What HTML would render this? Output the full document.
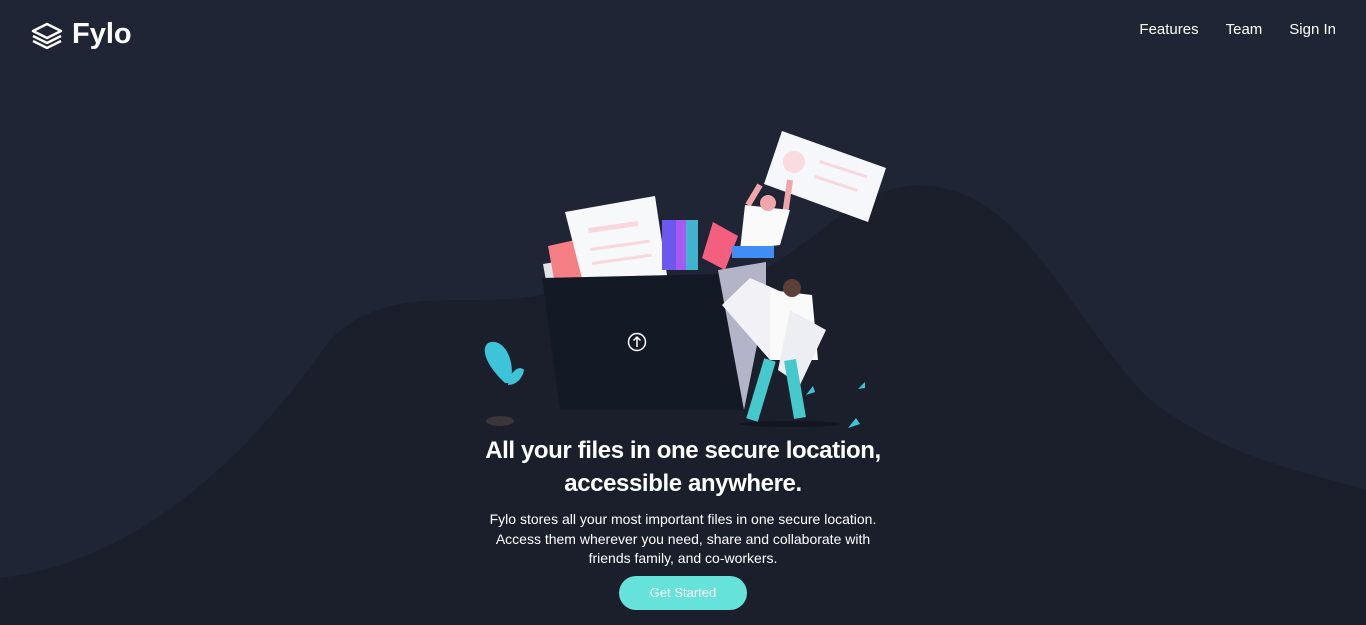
<!DOCTYPE html>
<html><head><meta charset="utf-8"><style>
*{margin:0;padding:0;box-sizing:border-box}
body{width:1366px;height:625px;overflow:hidden;background:#1f2535;font-family:"Liberation Sans",sans-serif;color:#fff;position:relative}
.bg{position:absolute;left:0;top:0}
.logo{position:absolute;left:30px;top:18px;display:flex;align-items:center;gap:8px;font-size:29px;font-weight:bold;letter-spacing:0}
nav{position:absolute;right:30px;top:21px;font-size:15px}
nav span{margin-left:27px}
h1{position:absolute;left:0;width:1366px;top:434px;text-align:center;font-size:24px;line-height:33px;font-weight:bold;letter-spacing:-0.4px}
p{position:absolute;left:0;width:1366px;top:510px;text-align:center;font-size:14px;line-height:19.5px}
.btn{position:absolute;left:619px;top:576px;width:128px;height:34px;border-radius:17px;background:#65e2d9;text-align:center;line-height:34px;font-size:13px}
</style></head><body>
<svg class="bg" width="1366" height="625">
<path d="M0 578 C150 560 260 440 330 340 C390 280 470 310 540 295 C600 280 700 310 780 260 C840 220 880 170 950 190 C1030 210 1080 330 1150 400 C1230 460 1300 470 1366 490 L1366 625 L0 625Z" fill="#1b1f2c"/>
<!-- illustration -->
<polygon points="543,264 580,258 590,290 548,292" fill="#dfe3ea"/>
<polygon points="548,246 575,240 585,280 555,284" fill="#f67f86"/>
<polygon points="565,212 655,196 668,282 585,290" fill="#f7f8fa"/>
<rect x="588" y="228" width="50" height="5" fill="#f9d7dd" transform="rotate(-8 588 228)"/>
<rect x="590" y="248" width="60" height="3" fill="#f9d7dd" transform="rotate(-8 590 248)"/>
<rect x="592" y="262" width="60" height="3" fill="#f9d7dd" transform="rotate(-8 592 262)"/>
<rect x="662" y="220" width="14" height="50" fill="#6b58f0"/>
<rect x="676" y="220" width="10" height="50" fill="#a55af0"/>
<rect x="686" y="220" width="12" height="50" fill="#40b3cf"/>
<polygon points="713,222 738,236 725,270 702,258" fill="#f45f80"/>
<polygon points="542,278 718,274 745,410 560,410" fill="#141a25"/>
<polygon points="718,270 766,262 766,300 744,410" fill="#b4b4c8"/>
<circle cx="637" cy="342" r="8.5" fill="none" stroke="#fff" stroke-width="1.5"/>
<path d="M637 347V337M633.5 340.5L637 337L640.5 340.5" stroke="#fff" stroke-width="1.5" fill="none"/>
<polygon points="782,131 886,168 868,222 764,184" fill="#f6f7fa"/>
<circle cx="794" cy="162" r="11" fill="#f9dbe0"/>
<rect x="820" y="160" width="50" height="3" fill="#f9d7dd" transform="rotate(18 820 160)"/>
<rect x="815" y="175" width="45" height="3" fill="#f9d7dd" transform="rotate(18 815 175)"/>
<path d="M760 185 L748 205 M790 180 L785 215" stroke="#f0a5a8" stroke-width="6"/>
<polygon points="745,205 790,210 780,245 740,250" fill="#fafafa"/>
<rect x="732" y="246" width="42" height="12" fill="#3f8ef5"/>
<circle cx="768" cy="203" r="8" fill="#f0a5a8"/>
<polygon points="722,305 750,278 800,300 770,360" fill="#f2f2f6"/>
<polygon points="770,290 812,295 818,360 770,360" fill="#fafafa"/>
<polygon points="790,310 826,330 800,385 778,370" fill="#eceef3"/>
<circle cx="792" cy="288" r="9" fill="#5a4036"/>
<path d="M770 360 L752 420 M790 360 L800 418" stroke="#45c9cd" stroke-width="12"/>
<ellipse cx="790" cy="424" rx="50" ry="3" fill="#111620"/>
<path d="M505 383 C480 360 480 340 495 342 C510 345 515 370 510 383Z" fill="#3ec4d8"/>
<path d="M508 385 C510 370 520 365 524 370 C522 380 515 385 508 385Z" fill="#3ec4d8"/>
<ellipse cx="500" cy="421" rx="14" ry="5" fill="#3a3639"/>
<path d="M848 428 L856 418 L860 424Z" fill="#3ec4d8"/>
<path d="M806 395 L813 386 L815 392Z" fill="#3ec4d8"/>
<path d="M858 389 L865 382 L865 388Z" fill="#3ec4d8"/>
</svg>
<div class="logo"><svg width="34" height="28" viewBox="0 0 34 28" fill="none" stroke="#fff" stroke-width="2.4" stroke-linejoin="round"><path d="M17 3L31 10L17 17L3 10Z"/><path d="M3 15L17 22L31 15"/><path d="M3 20L17 27L31 20"/></svg>Fylo</div>
<nav><span>Features</span><span>Team</span><span>Sign In</span></nav>
<h1>All your files in one secure location,<br>accessible anywhere.</h1>
<p>Fylo stores all your most important files in one secure location.<br>Access them wherever you need, share and collaborate with<br>friends family, and co-workers.</p>
<div class="btn">Get Started</div>
</body></html>
